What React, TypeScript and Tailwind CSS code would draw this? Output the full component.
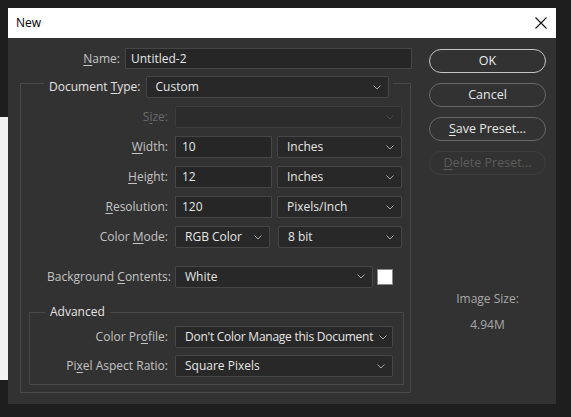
import React from "react";

const FONT = { fontFamily: '"Open Sans", "Noto Sans", "Liberation Sans", sans-serif' };

function Chevron({ dim = false }: { dim?: boolean }) {
  return (
    <svg width="8" height="5" viewBox="0 0 8 5" className="shrink-0">
      <polyline points="0.5,0.5 4,4 7.5,0.5" fill="none" stroke={dim ? "#4a4a4a" : "#a8a8a8"} strokeWidth="1" />
    </svg>
  );
}

function Select({ value, w, dim = false, tight = false }: { value?: string; w: string; dim?: boolean; tight?: boolean }) {
  return (
    <div
      className={`${w} h-[22px] shrink-0 flex items-center justify-between pl-[9px] ${tight ? "pr-[5px]" : "pr-[7px]"} rounded-[2px] border ${
        dim ? "border-[#3c3c3c] bg-[#2c2c2c]" : "border-[#464646] bg-[#282828]"
      } text-[#e6e6e6] text-[12px]`}
    >
      <span className={`whitespace-nowrap ${tight ? "tracking-[-0.25px]" : ""}`}>{value}</span>
      <Chevron dim={dim} />
    </div>
  );
}

function Input({ value, w }: { value: string; w: string }) {
  return (
    <div className={`${w} h-[22px] shrink-0 flex items-center pl-[6px] border border-[#464646] bg-[#262626] text-[#e6e6e6] text-[12px]`}>
      {value}
    </div>
  );
}

function U({ children }: { children: React.ReactNode }) {
  return <span className="underline underline-offset-[2px] decoration-1">{children}</span>;
}

function Row({
  label,
  labelW,
  dim = false,
  children,
}: {
  label: React.ReactNode;
  labelW: string;
  dim?: boolean;
  children: React.ReactNode;
}) {
  return (
    <div className="flex items-center h-[22px]">
      <div className={`${labelW} shrink-0 text-right pr-[7px] text-[12px] whitespace-nowrap ${dim ? "text-[#6a6a6a]" : "text-[#c4c4c4]"}`}>
        {label}
      </div>
      {children}
    </div>
  );
}

function Button({ children, variant }: { children: React.ReactNode; variant: "primary" | "normal" | "disabled" }) {
  const cls =
    variant === "primary"
      ? "border-[#c4c4c4] text-[#ececec]"
      : variant === "normal"
      ? "border-[#686868] text-[#e6e6e6]"
      : "border-[#3e3e3e] text-[#5c5c5c]";
  return (
    <div className={`w-[117px] h-[24px] rounded-full border-[1.5px] ${cls} flex items-center justify-center text-[12.5px]`}>
      {children}
    </div>
  );
}

export default function App() {
  return (
    <div className="relative w-[571px] h-[417px] bg-[#1e1e1e] overflow-hidden pt-[8px] pl-[8px]" style={FONT}>
      {/* window behind, peeking at the left */}
      <div className="absolute left-0 top-[117px] w-[8px] h-[263px] bg-[#f2f2f2]" />
      <div className="relative w-[548px] h-[396px] flex flex-col">
        {/* title bar */}
        <div className="h-[30px] bg-white flex items-center justify-between pl-[8px] pr-[9px] shrink-0">
          <span className="text-[12px] text-black">New</span>
          <svg width="12" height="12" viewBox="0 0 12 12">
            <path d="M0.5 0.5 L11.5 11.5 M11.5 0.5 L0.5 11.5" stroke="#111" strokeWidth="1.1" />
          </svg>
        </div>
        {/* body */}
        <div className="flex-1 bg-[#323232] flex">
          {/* left column */}
          <div className="w-[413px] shrink-0 flex flex-col pt-[10px]">
            <div className="flex items-center h-[21px]">
              <div className="w-[117px] shrink-0 text-right pr-[5px] text-[12px] text-[#c4c4c4]">
                <U>N</U>ame:
              </div>
              <div className="w-[287px] h-[21px] flex items-center pl-[5px] border border-[#464646] bg-[#262626] text-[#e6e6e6] text-[12px]">
                Untitled-2
              </div>
            </div>

            {/* Document Type group */}
            <div className="relative mt-[14px] ml-[12px] w-[391px] h-[310px] border border-[#484848] flex flex-col pt-[22px]">
              <div className="absolute -top-[8px] left-[23px] flex items-center bg-[#323232] pl-[5px] pr-[4px]">
                <span className="text-[12px] text-[#e2e2e2] pr-[5px] whitespace-nowrap">
                  Document <U>T</U>ype:
                </span>
                <Select value="Custom" w="w-[243px]" />
              </div>

              <div className="flex flex-col gap-[8px]">
                <Row label={<>S<U>i</U>ze:</>} labelW="w-[154px]" dim>
                  <Select w="w-[227px]" dim />
                </Row>
                <Row label={<><U>W</U>idth:</>} labelW="w-[154px]">
                  <Input value="10" w="w-[97px]" />
                  <div className="w-[5px]" />
                  <Select value="Inches" w="w-[125px]" />
                </Row>
                <Row label={<><U>H</U>eight:</>} labelW="w-[154px]">
                  <Input value="12" w="w-[97px]" />
                  <div className="w-[5px]" />
                  <Select value="Inches" w="w-[125px]" />
                </Row>
                <Row label={<><U>R</U>esolution:</>} labelW="w-[154px]">
                  <Input value="120" w="w-[97px]" />
                  <div className="w-[5px]" />
                  <Select value="Pixels/Inch" w="w-[125px]" />
                </Row>
                <Row label={<>Color <U>M</U>ode:</>} labelW="w-[154px]">
                  <Select value="RGB Color" w="w-[95px]" />
                  <div className="w-[8px]" />
                  <Select value="8 bit" w="w-[124px]" />
                </Row>
              </div>

              <div className="mt-[17px] flex items-center h-[23px]">
                <div className="w-[154px] shrink-0 text-right pr-[4px] text-[12px] text-[#c4c4c4] whitespace-nowrap">
                  Background <U>C</U>ontents:
                </div>
                <Select value="White" w="w-[198px]" />
                <div className="ml-[4px] w-[16px] h-[16px] bg-white border border-[#8a8a8a]" />
              </div>

              {/* Advanced group */}
              <div className="relative mt-[24px] ml-[8px] w-[375px] h-[73px] border border-[#484848] flex flex-col pt-[13px] gap-[7px]">
                <div className="absolute -top-[10px] left-[15px] bg-[#323232] px-[5px] text-[12px] text-[#e2e2e2]">
                  Advanced
                </div>
                <Row label={<>Color Pr<U>o</U>file:</>} labelW="w-[145px]">
                  <Select value="Don't Color Manage this Document" w="w-[218px]" tight />
                </Row>
                <Row label={<>Pi<U>x</U>el Aspect Ratio:</>} labelW="w-[145px]">
                  <Select value="Square Pixels" w="w-[218px]" />
                </Row>
              </div>
            </div>
          </div>

          {/* right column */}
          <div className="flex flex-col items-start pl-[8px] pt-[11px]">
            <div className="flex flex-col gap-[10px]">
              <Button variant="primary">OK</Button>
              <Button variant="normal">Cancel</Button>
              <Button variant="normal">
                <span>
                  <U>S</U>ave Preset...
                </span>
              </Button>
              <Button variant="disabled">
                <span>
                  <U>D</U>elete Preset...
                </span>
              </Button>
            </div>
            <div className="w-[117px] mt-[115px] flex flex-col items-center text-[12px] text-[#a8a8a8]">
              <span>Image Size:</span>
              <span className="mt-[8px]">4.94M</span>
            </div>
          </div>
        </div>
      </div>
    </div>
  );
}
